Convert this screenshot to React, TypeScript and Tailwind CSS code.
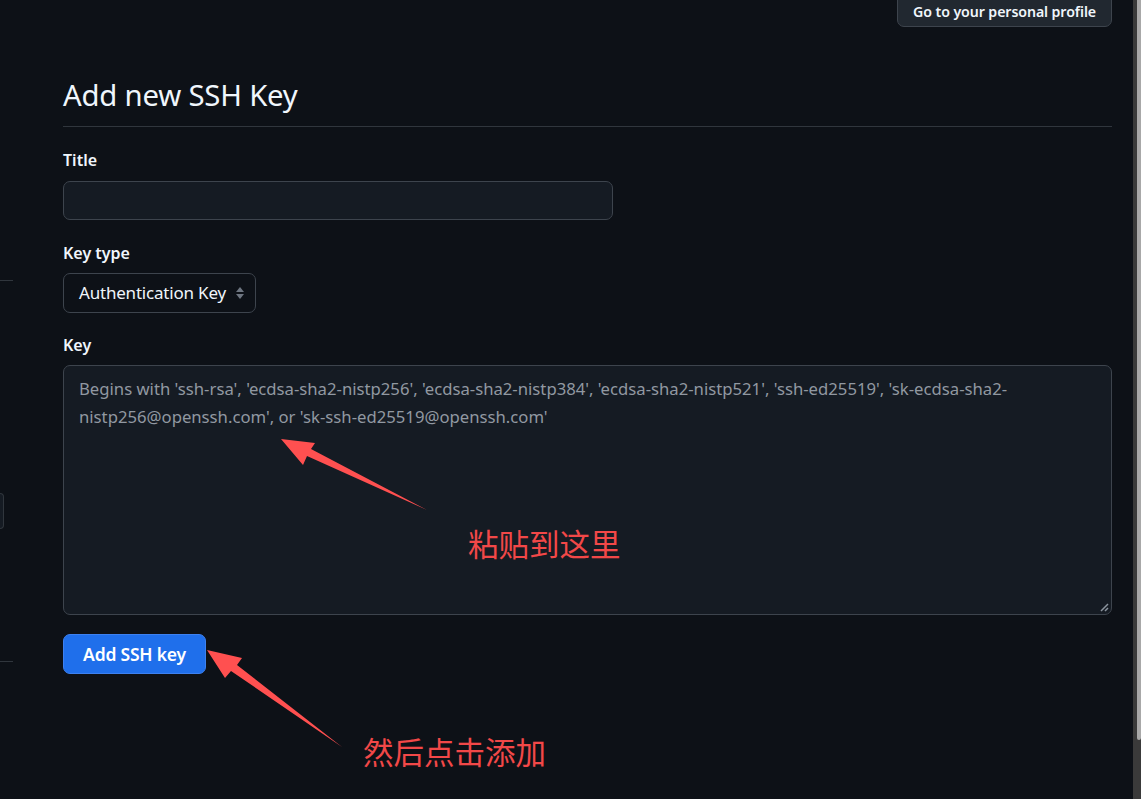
import React from "react";

const font = { fontFamily: '"Noto Sans", "Open Sans", Arial, "Noto Sans CJK SC", sans-serif' };

export default function App() {
  return (
    <div
      className="relative w-[1141px] h-[799px] overflow-hidden bg-[#0d1117] text-[#f0f6fc] flex"
      style={font}
    >
      {/* cut-off left sidebar */}
      <div className="w-[13px] shrink-0 flex flex-col">
        <div className="mt-[280px] h-px w-[13px] bg-[#30363d]" />
        <div className="mt-[212px] h-[36px] w-[4px] rounded-r-[6px] border border-l-0 border-[#30363d] bg-[#151b23]" />
        <div className="mt-[132px] h-px w-[13px] bg-[#30363d]" />
      </div>

      {/* main content */}
      <div className="ml-[50px] w-[1049px] shrink-0 flex flex-col">
        <div className="flex justify-end">
          <div className="mt-[-9px] h-[36px] px-[15px] flex items-center pt-[5px] rounded-[7px] border border-[#3d444d] bg-[#212830] text-[14.2px] font-semibold text-[#f0f6fc] tracking-[-0.1px]">
            Go to your personal profile
          </div>
        </div>

        <h1 className="mt-[50px] text-[29.3px] leading-[36px] font-normal text-[#f0f6fc] tracking-[-0.2px]">
          Add new SSH Key
        </h1>
        <div className="mt-[13px] h-px bg-[#30363d]" />

        <label className="mt-[22px] text-[16px] leading-[22px] font-semibold">Title</label>
        <div className="mt-[10px] w-[550px] h-[39px] rounded-[7px] border border-[#3d444d] bg-[#151b23]" />

        <label className="mt-[22px] text-[16px] leading-[22px] font-semibold">Key type</label>
        <div className="mt-[9px] w-[193px] h-[40px] rounded-[7px] border border-[#3d444d] bg-[#0d1117] flex items-center pl-[15px] pr-[10px] justify-between">
          <span className="text-[17px] text-[#f0f6fc] tracking-[-0.2px]">Authentication Key</span>
          <svg width="10" height="14" viewBox="0 0 10 14">
            <path d="M5 1 L9 6 L1 6 Z" fill="#6e7681" />
            <path d="M5 13 L9 8 L1 8 Z" fill="#6e7681" />
          </svg>
        </div>

        <label className="mt-[21px] text-[16px] leading-[22px] font-semibold">Key</label>
        <div className="relative mt-[9px] h-[250px] rounded-[7px] border border-[#3d444d] bg-[#151b23] px-[15px] pt-[9px]">
          <div className="text-[16.7px] leading-[28px] text-[#9198a1] whitespace-nowrap">
            Begins with 'ssh-rsa', 'ecdsa-sha2-nistp256', 'ecdsa-sha2-nistp384', 'ecdsa-sha2-nistp521', 'ssh-ed25519', 'sk-ecdsa-sha2-
            <br />
            nistp256@openssh.com', or 'sk-ssh-ed25519@openssh.com'
          </div>
          <svg className="absolute right-[2px] bottom-[2px]" width="9" height="9" viewBox="0 0 9 9">
            <path d="M8 1 L1 8 M8 5 L5 8" stroke="#8b949e" strokeWidth="1.5" />
          </svg>
        </div>

        <div className="mt-[19px]">
          <button className="h-[40px] w-[143px] rounded-[7px] bg-[#1f6feb] border border-[#3d81f0] text-[17.5px] font-semibold text-white tracking-[-0.2px]">
            Add SSH key
          </button>
        </div>
      </div>

      <div className="flex-1" />

      {/* scrollbar */}
      <div className="w-[8px] shrink-0 bg-[#3a3a3a] flex">
        <div className="ml-[4px] w-[4px] h-[740px] bg-[#a8a8a8] rounded-b-[2px]" />
      </div>

      {/* annotations */}
      <svg className="absolute left-0 top-0 pointer-events-none" width="1141" height="799">
        <polygon
          points="281,439 315,443 311,449 427,510 307,456 303,465"
          fill="#ff5050"
        />
        <polygon
          points="207,650 242,658 237,665 342,747 231,671 225,678"
          fill="#ff5050"
        />
      </svg>
      <div
        className="absolute left-[468px] top-[523px] text-[30.5px] leading-[40px] text-[#f24848]"
        style={{ fontFamily: '"Noto Sans CJK SC", sans-serif' }}
      >
        粘贴到这里
      </div>
      <div
        className="absolute left-[363px] top-[731px] text-[30.5px] leading-[40px] text-[#f24848]"
        style={{ fontFamily: '"Noto Sans CJK SC", sans-serif' }}
      >
        然后点击添加
      </div>
    </div>
  );
}
